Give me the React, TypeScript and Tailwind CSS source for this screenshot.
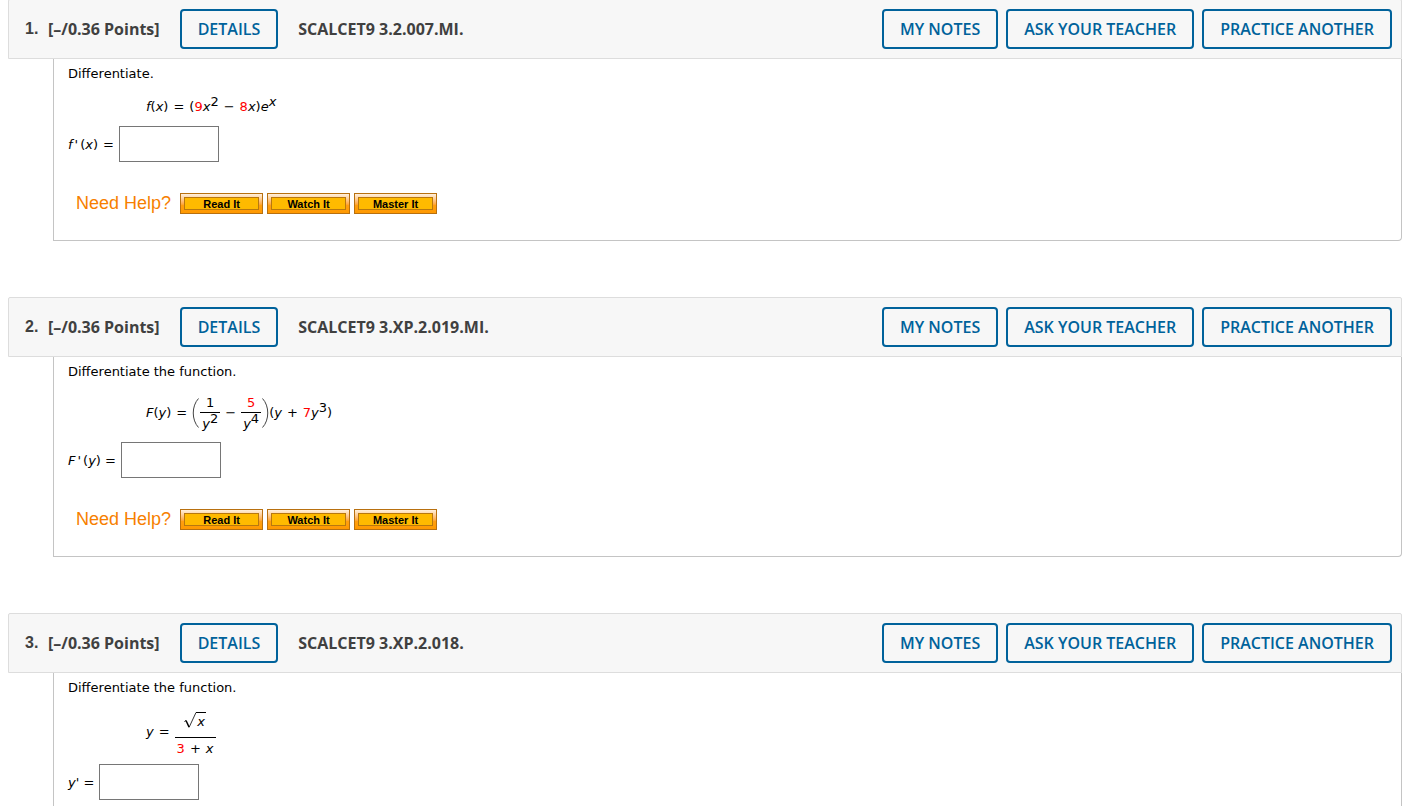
import React from 'react';

interface Question {
  id: number;
  source: string;
  prompt: string;
  formula: React.ReactNode;
  label: React.ReactNode;
  help: string[];
}

const HELP_LINKS = ['Read It', 'Watch It', 'Master It'];

// zero line height keeps the raised text from pushing its line down
function Sup({ children }: { children: React.ReactNode }) {
  return <sup className="static align-[5px] text-[13px] leading-[0]">{children}</sup>;
}

function Red({ children }: { children: React.ReactNode }) {
  return <span className="text-[#f00]">{children}</span>;
}

function Op({ children }: { children: React.ReactNode }) {
  return <span className="mx-[5px]">{children}</span>;
}

function Prime() {
  return <i className="mx-0.5">'</i>;
}

function Fraction({ top, bottom }: { top: React.ReactNode; bottom: React.ReactNode }) {
  return (
    <span className="inline-flex flex-col items-center self-start">
      {top}
      <span className="h-5 w-full border-t border-black px-0.5 text-center leading-[22px]">{bottom}</span>
    </span>
  );
}

function Paren({ side }: { side: 'left' | 'right' }) {
  return (
    <svg width="8" height="30" viewBox="0 0 8 30" fill="none" stroke="#444" aria-hidden="true">
      <path d={side === 'left' ? 'M6.5 0.5C-0.5 8 -0.5 22 6.5 29.5' : 'M1.5 0.5C8.5 8 8.5 22 1.5 29.5'} />
    </svg>
  );
}

function SquareRoot({ children }: { children: React.ReactNode }) {
  return (
    <span className="flex">
      <svg width="12" height="20" viewBox="0 0 12 20" fill="none" stroke="#000" aria-hidden="true">
        <path d="M0.5 9.5L2 8.5" />
        <path d="M2 8.5L5 15" strokeWidth="1.5" />
        <path d="M5 15.5L12 0.5" strokeWidth="0.8" />
      </svg>
      <span className="border-t border-black px-px leading-[18px]">{children}</span>
    </span>
  );
}

const questions: Question[] = [
  {
    id: 1,
    source: 'SCALCET9 3.2.007.MI.',
    prompt: 'Differentiate.',
    formula: (
      <span className="h-5 leading-[22px]">
        <i>f</i>(<i>x</i>)<Op>=</Op>(<Red>9</Red><i>x</i><Sup>2</Sup><Op>−</Op><Red>8</Red><i>x</i>)<i>e</i><Sup><i>x</i></Sup>
      </span>
    ),
    label: <><i>f</i><Prime />(<i>x</i>)<span className="ml-[5px]">=</span></>,
    help: HELP_LINKS,
  },
  {
    id: 2,
    source: 'SCALCET9 3.XP.2.019.MI.',
    prompt: 'Differentiate the function.',
    formula: (
      <span className="flex h-[38px] items-center leading-[18px]">
        <span><i>F</i>(<i>y</i>)<Op>=</Op></span>
        <Paren side="left" />
        <Fraction
          top={<span className="h-[18px]">1</span>}
          bottom={<><i>y</i><Sup>2</Sup></>}
        />
        <Op>−</Op>
        <Fraction
          top={<span className="h-[18px]"><Red>5</Red></span>}
          bottom={<><i>y</i><Sup>4</Sup></>}
        />
        <Paren side="right" />
        <span>(<i>y</i><Op>+</Op><Red>7</Red><i>y</i><Sup>3</Sup>)</span>
      </span>
    ),
    label: <><i>F</i><Prime />(<i>y</i>) =</>,
    help: HELP_LINKS,
  },
  {
    id: 3,
    source: 'SCALCET9 3.XP.2.018.',
    prompt: 'Differentiate the function.',
    formula: (
      <span className="flex h-11 items-center leading-[18px]">
        <span><i>y</i><Op>=</Op></span>
        <Fraction
          top={<span className="h-[27px] pt-0.5"><SquareRoot><i>x</i></SquareRoot></span>}
          bottom={<><Red>3</Red><Op>+</Op><i>x</i></>}
        />
      </span>
    ),
    label: <><i>y</i><i>'</i> =</>,
    help: [],
  },
];

function OutlineButton({ children }: { children: React.ReactNode }) {
  return (
    <button
      type="button"
      className="h-10 shrink-0 rounded border-2 border-[#00629b] px-4 text-base leading-none font-semibold text-[#00629b]"
    >
      {children}
    </button>
  );
}

function HelpButton({ children }: { children: React.ReactNode }) {
  return (
    <button
      type="button"
      className="h-[21px] w-[83px] border border-[#b8700f] bg-linear-to-b from-[#fff0dc] via-[#ff9f10] via-60% to-[#ff9900] p-[3px]"
    >
      <span className="flex h-[13px] items-center justify-center border border-[#b8780f] bg-[#ffba00] pt-px font-['Liberation_Sans',Arial,sans-serif] text-[11px] leading-none font-bold text-black">
        {children}
      </span>
    </button>
  );
}

function QuestionCard({ question }: { question: Question }) {
  const inputId = `answer-${question.id}`;

  return (
    <section>
      <header className="flex h-[60px] items-center rounded-t-xs border border-[#ddd] bg-[#f7f7f7] pr-[9px] pl-4 font-['Open_Sans',sans-serif] text-base font-bold text-[#404040]">
        <span className="w-[23px] font-['Liberation_Sans',Arial,sans-serif]">{question.id}.</span>
        <span className="mr-5">[–/0.36 Points]</span>
        <OutlineButton>DETAILS</OutlineButton>
        <h2 className="ml-5">{question.source}</h2>
        <div className="ml-auto flex gap-2">
          <OutlineButton>MY NOTES</OutlineButton>
          <OutlineButton>ASK YOUR TEACHER</OutlineButton>
          <OutlineButton>PRACTICE ANOTHER</OutlineButton>
        </div>
      </header>

      <div className="ml-[45px] rounded-br border border-t-0 border-[#c4c4c4] px-3.5 pt-[5px] pb-[26px] text-[13px]">
        <p className="leading-5">{question.prompt}</p>
        <div className="mt-3 flex pl-[78px]">{question.formula}</div>
        <div className="mt-2.5 flex items-center gap-[5px]">
          <label htmlFor={inputId} className="pt-0.5">{question.label}</label>
          <input id={inputId} type="text" className="h-9 w-[100px] border border-[#767676] bg-white px-2" />
        </div>

        {question.help.length > 0 && (
          <div className="mt-[31px] flex h-[21px] items-center gap-1 pl-2">
            <span className="mr-[5px] pb-px font-['Liberation_Sans',Arial,sans-serif] text-lg leading-5 text-[#f77f00]">
              Need Help?
            </span>
            {question.help.map((link) => (
              <HelpButton key={link}>{link}</HelpButton>
            ))}
          </div>
        )}
      </div>
    </section>
  );
}

export default function App() {
  return (
    <main className="h-screen overflow-hidden bg-white pr-[15px] pl-2 font-['DejaVu_Sans',Verdana,sans-serif] text-black">
      <div className="-mt-px flex flex-col gap-14">
        {questions.map((question) => (
          <QuestionCard key={question.id} question={question} />
        ))}
      </div>
    </main>
  );
}
